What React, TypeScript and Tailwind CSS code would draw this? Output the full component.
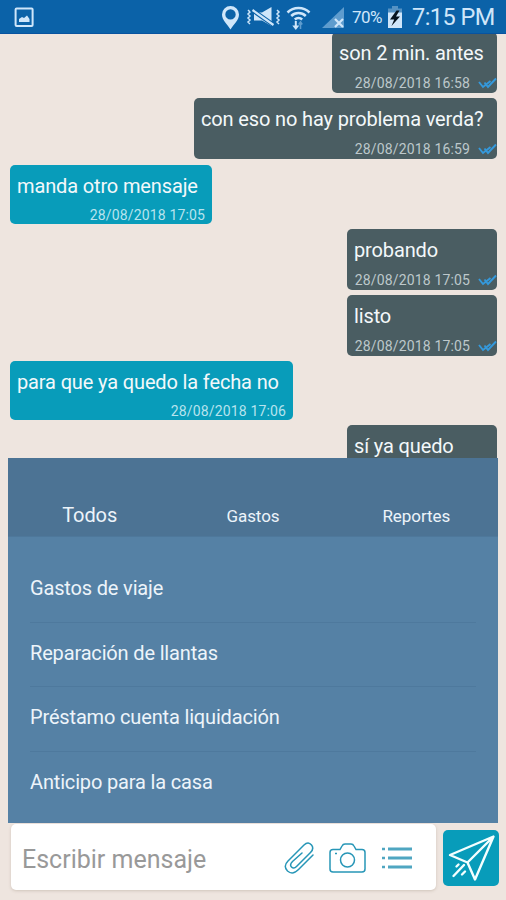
import React from "react";

type Message = {
  text: string;
  date?: string;
  mine?: boolean;
  className: string;
};

const messages: Message[] = [
  { text: "son 2 min. antes", date: "28/08/2018 16:58", mine: true, className: "w-[165px] h-[61px] -mt-[2px]" },
  { text: "con eso no hay problema verda?", date: "28/08/2018 16:59", mine: true, className: "w-[303px] h-[61px] mt-[5px]" },
  { text: "manda otro mensaje", date: "28/08/2018 17:05", className: "w-[202px] h-[59px] mt-[6px]" },
  { text: "probando", date: "28/08/2018 17:05", mine: true, className: "w-[150px] h-[61px] mt-[5px]" },
  { text: "listo", date: "28/08/2018 17:05", mine: true, className: "w-[150px] h-[61px] mt-[5px]" },
  { text: "para que ya quedo la fecha no", date: "28/08/2018 17:06", className: "w-[283px] h-[59px] mt-[5px]" },
  { text: "sí ya quedo", mine: true, className: "w-[150px] h-[61px] mt-[5px]" },
];

const options = [
  "Gastos de viaje",
  "Reparación de llantas",
  "Préstamo cuenta liquidación",
  "Anticipo para la casa",
];

function StatusBar() {
  return (
    <header className="relative z-10 flex h-[34px] shrink-0 items-center border-b border-[#0853a0] bg-[#0b62a8] text-[#cfe6fa]">
      <svg className="ml-[14px] mt-[2px]" width="21" height="21" viewBox="0 0 21 21" fill="none">
        <rect x="1.6" y="1.6" width="17" height="17.5" rx="1" stroke="currentColor" strokeWidth="2" />
        <path d="M5 15v-3l3-2 2 1 3-2.500 2.500 3.500v3z" fill="currentColor" />
      </svg>

      <svg className="ml-[186px] mt-[1px]" width="19" height="25" viewBox="0 0 19 25">
        <path
          d="M9.500 1A8.500 8.500 0 0 0 1 9.500C1 15 6 19 9.500 24.500 13 19 18 15 18 9.500A8.500 8.500 0 0 0 9.500 1zm0 3.200a5.200 5.200 0 1 1 0 10.400 5.200 5.200 0 0 1 0-10.400z"
          fill="currentColor"
          fillRule="evenodd"
        />
      </svg>

      <svg className="ml-[6px] mt-[1px]" width="35" height="22" viewBox="0 0 35 22" fill="none">
        <path d="M2 4l2 2-2 2 2 2-2 2 2 2-2 2 2 2M31 4l2 2-2 2 2 2-2 2 2 2-2 2 2 2" stroke="currentColor" strokeWidth="1.500" />
        <path d="M8 6.500h8l9.500-5.500v19l-9.500-5.500H8z" fill="currentColor" />
        <path d="M5.500 3.500l22 15.500" stroke="#0b62a8" strokeWidth="4.400" />
        <path d="M6.500 4l21 15" stroke="currentColor" strokeWidth="2.200" />
      </svg>

      <svg className="ml-[5px] mt-[1px]" width="25" height="27" viewBox="0 0 25 27" fill="none">
        <path d="M1.500 8.500a15.500 15.500 0 0 1 22 0M5.200 12a10.500 10.500 0 0 1 14.600 0M8.800 15.500a5.600 5.600 0 0 1 7.400 0" stroke="currentColor" strokeWidth="2.500" />
        <path d="M9.800 17v6" stroke="currentColor" strokeWidth="2" />
        <path d="M6.300 21.500h7L9.800 26z" fill="currentColor" />
        <path d="M14.500 25v-6M12.800 20.500l1.700-2.500 1.700 2.500" stroke="#5e9cce" strokeWidth="1.600" />
      </svg>

      <svg className="ml-[11px] mt-[2px]" width="23" height="22" viewBox="0 0 23 22" fill="none">
        <path d="M0 21L22 0v21z" fill="#5e9cce" />
        <path d="M13 12l8 8M21 12l-8 8" stroke="#cfe6fa" strokeWidth="2.200" />
      </svg>

      <span className="ml-[7px] mt-[3px] w-[31px] whitespace-nowrap text-[17px] tracking-[-0.5px]">70%</span>

      <svg className="ml-[4px] mt-[1px]" width="16" height="24" viewBox="0 0 16 24">
        <path d="M5 1h6v2.500h4V8H1V3.500h4z" fill="#5592c4" />
        <path d="M1 7.500h14V23H1z" fill="#cfe6fa" />
        <path d="M9.500 5.500L3 14.500h4.200L4.500 21l8.500-9.500H9L12.500 5.500z" fill="#05131f" />
      </svg>

      <span className="ml-[9px] mt-[3px] whitespace-nowrap text-[23.500px] tracking-[-0.550px]">7:15 PM</span>
    </header>
  );
}

function DoubleCheck() {
  return (
    <svg width="19" height="12" viewBox="0 0 19 12" fill="none" stroke="#3499dc" strokeWidth="1.900">
      <path d="M1 5l4 5 7.500-6M6.500 5.500L10 10l8-8.500" />
    </svg>
  );
}

function Bubble({ message }: { message: Message }) {
  const { text, date, mine, className } = message;

  return (
    <div
      className={`flex shrink-0 flex-col justify-between overflow-hidden whitespace-nowrap rounded-[5px] pl-[7px] ${
        mine ? "self-end bg-[#4a5d62]" : "self-start bg-[#089cba]"
      } ${className}`}
    >
      <p className="pt-[8px] text-[20px] leading-[26px] tracking-[-0.140px] text-[#f3f8fa]">{text}</p>
      {date && (
        <div className={`flex items-center justify-end ${mine ? "pb-[1px]" : "pr-[7px]"}`}>
          <span className={`text-[14px] leading-[18px] tracking-[0.15px] ${mine ? "text-[#bdc8cb]" : "text-[#b7e3ee]"}`}>{date}</span>
          {mine && (
            <span className="ml-[8px]">
              <DoubleCheck />
            </span>
          )}
        </div>
      )}
    </div>
  );
}

function OptionsPanel() {
  return (
    <section className="ml-[8px] h-[365px] w-[490px] shrink-0 bg-[#5581a5] text-[#edf4fa]">
      <div className="grid h-[79px] grid-cols-3 items-baseline border-b border-[#4e789b] bg-[#4c7394] pt-[42px] text-center">
        <span className="text-[20px] tracking-[-0.1px]">Todos</span>
        <span className="text-[17px] tracking-[-0.050px]">Gastos</span>
        <span className="text-[17px] tracking-[-0.050px]">Reportes</span>
      </div>
      <ul className="mx-[22px] pt-[21px]">
        {options.map((option) => (
          <li
            key={option}
            className="flex h-[64.700px] items-center border-b border-[#4e799d] pb-[4px] text-[20px] tracking-[-0.160px] last:border-0"
          >
            {option}
          </li>
        ))}
      </ul>
    </section>
  );
}

function Composer() {
  return (
    <footer className="flex items-start pl-[11px] pt-[1px]">
      <div className="flex h-[66px] w-[425px] items-center rounded-[5px] bg-white shadow-[0_1px_3px_rgba(120,100,80,0.25)]">
        <span className="ml-[11px] w-[250px] pt-[5px] text-[25px] text-[#999]">Escribir mensaje</span>
        <svg className="ml-[11px] mt-[2px]" width="32" height="34" viewBox="0 0 32 34" fill="none" stroke="#2796b7" strokeWidth="1.500" strokeLinecap="round">
          <path d="M30 14L15.500 28.500C11 33 8 33 4.500 30 1.500 27 1.500 23.500 5 20L21 4C24 1 26.500 1.500 28.500 4 30.500 6.500 30 9 27.500 11.500L13.500 25.500C11.500 27.500 10 27.500 8.500 26 7 24.500 7.500 22.500 9.500 20.500L19 12" />
        </svg>
        <svg className="ml-[14px] mt-[2px]" width="37" height="30" viewBox="0 0 37 30" fill="none" stroke="#2796b7" strokeWidth="1.500">
          <path d="M4 6.500h7l2-3.500Q14 1 16 1h6q2 0 3 2l2 3.500h6q3 0 3 3V26q0 3-3 3H4q-3 0-3-3V9.500q0-3 3-3z" />
          <circle cx="18.500" cy="17" r="7" />
          <path d="M6 10.500h2" />
        </svg>
        <svg className="ml-[15px] mt-[2px]" width="32" height="24" viewBox="0 0 32 24" fill="none" stroke="#4fa6c1">
          <path d="M7 3h24M7 12h24M7 21h24" strokeWidth="2.800" />
          <path d="M1 3h3M1 12h3M1 21h3" strokeWidth="2.600" />
        </svg>
      </div>
      <button className="ml-[7px] mt-[6px] h-[56px] w-[56px] rounded-[5px] bg-[#089cba]">
        <svg width="56" height="56" viewBox="0 0 56 56" fill="none" stroke="#f4ffff" strokeWidth="2.400" strokeLinejoin="round" strokeLinecap="round">
          <path d="M50.500 6.500L7 25l17.500 7.500 7.500 17zM50.500 6.500l-26 26" />
          <path d="M21 35L10.500 46M15.500 34.500l-2 2M22 41.500l-3 3" />
        </svg>
      </button>
    </footer>
  );
}

export default function App() {
  return (
    <div className="flex h-[900px] w-[506px] flex-col overflow-hidden bg-[#eee5df] font-['Roboto',sans-serif]">
      <StatusBar />
      <main className="flex h-[424px] shrink-0 flex-col overflow-hidden pl-[10px] pr-[9px]">
        {messages.map((message, i) => (
          <Bubble key={i} message={message} />
        ))}
      </main>
      <OptionsPanel />
      <Composer />
    </div>
  );
}
